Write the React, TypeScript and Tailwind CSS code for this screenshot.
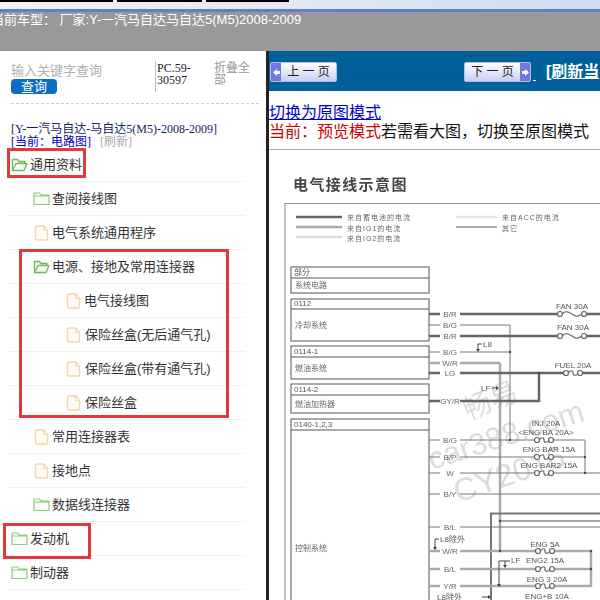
import React from 'react';

const cjk = "font-['Liberation_Sans','Noto_Sans_CJK_SC',sans-serif]";
const serif = "font-['Liberation_Serif','Noto_Sans_CJK_SC',serif]";

const FolderIcon: React.FC<{ open?: boolean }> = ({ open }) => (
  <svg width="17" height="15" viewBox="0 0 17 15" fill="none" className="shrink-0">
    {open ? (
      <path
        d="M1.5 13.5V2.5h5l1.5 2h6v2M1.5 13.5h11.5l3-7H5L1.5 13.5z"
        stroke="#6cbb5a"
        strokeWidth="1.3"
        strokeLinejoin="round"
        fill="#f4fbf0"
      />
    ) : (
      <path
        d="M1 13.5V2h5.5L8 4h8v9.500H1zM1 5h15"
        stroke="#8ecb82"
        strokeWidth="1.2"
        strokeLinejoin="round"
        fill="#f7fcf5"
      />
    )}
  </svg>
);

const FileIcon = () => (
  <svg width="15" height="16" viewBox="0 0 15 16" fill="none" className="shrink-0">
    <path
      d="M1.500 2.500a1.500 1.500 0 0 1 1.500-1.500h6.500l4 4.500v8a1.500 1.500 0 0 1-1.500 1.500H3a1.500 1.500 0 0 1-1.500-1.500z"
      stroke="#f5d5a8"
      strokeWidth="1.400"
      fill="#fffdf9"
    />
    <path d="M9.500 1v4.500h4" stroke="#f5d5a8" strokeWidth="1" />
  </svg>
);

const treeRows = [
  { label: '通用资料', pad: 'pl-[3px]', icon: 'open', gap: 'gap-[2px]' },
  { label: '查阅接线图', pad: 'pl-[25px]', icon: 'folder', gap: 'gap-[2px]' },
  { label: '电气系统通用程序', pad: 'pl-[26px]', icon: 'file', gap: 'gap-[3px]' },
  { label: '电源、接地及常用连接器', pad: 'pl-[25px]', icon: 'open', gap: 'gap-[2px]' },
  { label: '电气接线图', pad: 'pl-[58px]', icon: 'file', gap: 'gap-[3px]' },
  { label: '保险丝盒(无后通气孔)', pad: 'pl-[58px]', icon: 'file', gap: 'gap-[4px]' },
  { label: '保险丝盒(带有通气孔)', pad: 'pl-[58px]', icon: 'file', gap: 'gap-[4px]' },
  { label: '保险丝盒', pad: 'pl-[58px]', icon: 'file', gap: 'gap-[4px]' },
  { label: '常用连接器表', pad: 'pl-[26px]', icon: 'file', gap: 'gap-[3px]' },
  { label: '接地点', pad: 'pl-[26px]', icon: 'file', gap: 'gap-[3px]' },
  { label: '数据线连接器', pad: 'pl-[25px]', icon: 'folder', gap: 'gap-[2px]' },
  { label: '发动机', pad: 'pl-[3px]', icon: 'folder', gap: 'gap-[2px]' },
  { label: '制动器', pad: 'pl-[3px]', icon: 'folder', gap: 'gap-[2px]' },
];

const Sidebar = () => (
  <aside className="relative w-[269px] h-full shrink-0 bg-white border-r-[3px] border-[#222] overflow-hidden">
    <div className="flex h-[52px] pt-[10px] pl-[11px]">
      <div className="w-[144px] pt-[3px]">
        <div className={`${cjk} text-[13px] leading-[14px] text-[#b0b0b0]`}>输入关键字查询</div>
        <div className={`${cjk} w-[46px] h-[15px] mt-[1px] rounded-[4px] bg-[#0b6cc0] text-white text-[13px] leading-[15px] text-center`}>
          查询
        </div>
      </div>
      <div className={`${serif} w-[59px] h-[31px] border-l border-[#bbb] pl-[1px] pt-[1px] text-[12px] leading-[12px] text-[#222]`}>
        PC.59-
        <br />
        30597
      </div>
      <div className={`${cjk} w-[42px] text-[12px] leading-[12px] pt-[1px] text-[#999]`}>折叠全部</div>
    </div>
    <div className="ml-[11px] w-[248px] border-t border-dashed border-[#ccc]" />
    <div className={`${serif} pl-[11px] pt-[19px] h-[44px] text-[12px] leading-[13px] text-[#112266]`}>
      <div>[Y-一汽马自达-马自达5(M5)-2008-2009]</div>
      <div className="flex gap-[9px]">
        <span className="text-[#0000c0]">[当前：电路图]</span>
        <span className="text-[#aaa]">[刷新]</span>
      </div>
    </div>
    <div className="ml-[8px]">
      {treeRows.map((r) => (
        <div
          key={r.label}
          className={`h-[34px] w-[237px] flex items-center ${r.pad} ${r.gap} border-b border-[#f2f2f2]`}
        >
          {r.icon === 'file' ? <FileIcon /> : <FolderIcon open={r.icon === 'open'} />}
          <span className={`${cjk} text-[13px] text-[#333] whitespace-nowrap`}>{r.label}</span>
        </div>
      ))}
    </div>
    {/* red annotation boxes */}
    <div className="absolute left-[7px] top-[97px] w-[79px] h-[30px] border-[3px] border-[#e03a3e]" />
    <div className="absolute left-[19px] top-[198px] w-[210px] h-[169px] border-[3px] border-[#e03a3e]" />
    <div className="absolute left-[3px] top-[472px] w-[88px] h-[36px] border-[3px] border-[#e03a3e]" />
  </aside>
);

const PageButton: React.FC<{ label: string; next?: boolean }> = ({ label, next }) => (
  <div
    className={`flex ${next ? 'flex-row-reverse' : ''} w-[67px] h-[20px] shrink-0 rounded-[2px] border border-[#a8c4ee] bg-gradient-to-b from-white to-[#c9cff2] overflow-hidden`}
  >
    <div className="w-[10px] h-full bg-[#7079e0] flex items-center justify-center">
      <svg width="7" height="7" viewBox="0 0 7 7">
        <path d={next ? 'M0 2h3V0l4 3.500L3 7V5H0z' : 'M7 2H4V0L0 3.500 4 7V5h3z'} fill="#fff" />
      </svg>
    </div>
    <div className={`${cjk} flex-1 text-center text-[12px] leading-[18px] text-[#222] whitespace-pre`}>{label}</div>
  </div>
);

const Fuse: React.FC<{ x: number; y: number; w?: number }> = ({ x, y, w = 7 }) => (
  <g>
    <rect x={x - w} y={y - 3} width={w * 2} height="6" fill="#fff" />
    <g stroke="#666" fill="#fff" strokeWidth="1.200">
      <circle cx={x - w} cy={y} r="2.500" />
      <circle cx={x + w} cy={y} r="2.500" />
      <path d={`M${x - w + 2} ${y}c3-3 5-3 ${w - 2} 0s4 3 ${w - 2} 0`} fill="none" />
    </g>
  </g>
);

const sections = [
  { y: 267, head: 278, bottom: 293, code: '部分', name: '系统电路', nameY: 288 },
  { y: 299, head: 309, bottom: 341, code: '0112', name: '冷却系统', nameY: 328 },
  { y: 346, head: 357, bottom: 379, code: '0114-1', name: '燃油系统', nameY: 371 },
  { y: 384, head: 395, bottom: 413, code: '0114-2', name: '燃油加热器', nameY: 407 },
  { y: 419, head: 430, bottom: 640, code: '0140-1,2,3', name: '控制系统', nameY: 551 },
];

const wires = [
  { y: 314, label: 'B/R', color: '#666', w: 2.500 },
  { y: 325, label: 'B/G', color: '#777', w: 1 },
  { y: 336, label: 'B/R', color: '#666', w: 2.500 },
  { y: 352, label: 'B/G', color: '#777', w: 1 },
  { y: 363, label: 'W/R', color: '#aaa', w: 2.500 },
  { y: 373, label: 'LG', color: '#666', w: 2.500 },
  { y: 401, label: 'GY/R', color: '#666', w: 2.500 },
  { y: 440, label: 'B/G', color: '#777', w: 1 },
  { y: 457, label: 'B/P', color: '#777', w: 1 },
  { y: 473, label: 'W', color: '#777', w: 1 },
  { y: 494, label: 'B/Y', color: '#777', w: 1 },
  { y: 527, label: 'B/L', color: '#777', w: 1 },
  { y: 551, label: 'W/R', color: '#aaa', w: 2.500 },
  { y: 569, label: 'B/L', color: '#aaa', w: 2.500 },
  { y: 586, label: 'Y/R', color: '#aaa', w: 2.500 },
];

// end of each wire on the right, most run off the page
const wireEnd: Record<number, number> = { 325: 510, 352: 510, 363: 500, 401: 539, 440: 585, 457: 585, 551: 591, 569: 591, 586: 591 };

const fuses = [
  { x: 572, y: 314, w: 12 },
  { x: 572, y: 336, w: 12 },
  { x: 573, y: 373, w: 7 },
  { x: 544, y: 440, w: 7 },
  { x: 544, y: 457, w: 7 },
  { x: 544, y: 473, w: 7 },
  { x: 545, y: 551, w: 7 },
  { x: 545, y: 569, w: 7 },
  { x: 545, y: 586, w: 7 },
];

const fuseLabels = [
  { x: 572, y: 309, t: 'FAN 30A' },
  { x: 573, y: 330, t: 'FAN 30A' },
  { x: 573, y: 368, t: 'FUEL 20A' },
  { x: 546, y: 426, t: 'INJ 20A' },
  { x: 546, y: 435, t: '<ENG BA 20A>' },
  { x: 549, y: 452, t: 'ENG BAR 15A' },
  { x: 549, y: 468, t: 'ENG BAR2 15A' },
  { x: 545, y: 547, t: 'ENG 5A' },
  { x: 545, y: 563, t: 'ENG2 15A' },
  { x: 547, y: 582, t: 'ENG 3 20A' },
  { x: 547, y: 599, t: 'ENG+B 10A' },
];

const Diagram = () => (
  <svg
    viewBox="269 150 331 450"
    width="331"
    height="450"
    className="block blur-[0.4px]"
    fontFamily="'Liberation Sans','Noto Sans CJK SC',sans-serif"
  >
    <text x="293" y="190" fontSize="15" fontWeight="700" letterSpacing="1.400" fill="#444">电气接线示意图</text>
    <path d="M285 610V203.500H600" fill="none" stroke="#999" strokeWidth="1.200" />

    {/* legend */}
    <path d="M296 217h46" stroke="#666" strokeWidth="2.500" />
    <path d="M296 227h46" stroke="#aaa" strokeWidth="2.500" />
    <path d="M296 237h46" stroke="#ddd" strokeWidth="2.500" />
    <path d="M456 217h41" stroke="#e6e6e6" strokeWidth="2.500" />
    <path d="M456 227h41" stroke="#555" strokeWidth="1" />
    <g fontSize="7" fill="#666" letterSpacing="1">
      <text x="347" y="220">来自蓄电池的电流</text>
      <text x="347" y="230.500">来自IG1的电流</text>
      <text x="347" y="240.500">来自IG2的电流</text>
      <text x="502" y="220">来自ACC的电流</text>
      <text x="502" y="230.500">其它</text>
    </g>

    {/* watermark */}
    <g fill="#dcdcdc">
      <text x="468" y="420" fontSize="28" transform="rotate(-22 468 420)">畅易</text>
      <text x="432" y="470" fontSize="31" transform="rotate(-18 432 470)">car388.com</text>
      <text x="458" y="503" fontSize="32" transform="rotate(-19 458 503)">CY2016</text>
    </g>

    {/* system boxes */}
    {sections.map((s) => (
      <g key={s.code} stroke="#555" fill="none" strokeWidth="1">
        <rect x="291" y={s.y} width="138" height={s.bottom - s.y} />
        <path d={`M291 ${s.head}H429`} />
        <text x="294" y={s.head - 3} fontSize="8" fill="#555" stroke="none">{s.code}</text>
        <text x="295" y={s.nameY} fontSize="8" fill="#666" stroke="none">{s.name}</text>
      </g>
    ))}

    {/* verticals and control block */}
    <path d="M510 325V440" stroke="#777" strokeWidth="1" />
    <path d="M500 363V551" stroke="#aaa" strokeWidth="2.500" />
    <path d="M539 373V402" stroke="#666" strokeWidth="2.500" />
    <path d="M585 440V473" stroke="#777" strokeWidth="1" />
    <path d="M591 551V587" stroke="#aaa" strokeWidth="2.500" />
    <path d="M600 513.500H491V600" fill="none" stroke="#777" strokeWidth="2" />
    <path d="M500 521H600" stroke="#aaa" strokeWidth="2" />

    {/* wires */}
    {wires.map((w) => (
      <g key={w.y}>
        <path d={`M429 ${w.y}h11M460 ${w.y}H${wireEnd[w.y] ?? 600}`} stroke={w.color} strokeWidth={w.w} />
        <text x="450" y={w.y + 3} textAnchor="middle" fontSize="8" fill="#666">{w.label}</text>
      </g>
    ))}

    {/* fuses */}
    {fuses.map((f) => (
      <Fuse key={f.y} x={f.x} y={f.y} w={f.w} />
    ))}
    <g fontSize="8" fill="#555" textAnchor="middle">
      {fuseLabels.map((f) => (
        <text key={f.y} x={f.x} y={f.y}>{f.t}</text>
      ))}
    </g>

    {/* branch notes */}
    <g fontSize="8" fill="#555">
      <text x="483" y="347">L8</text>
      <text x="481" y="391">LF</text>
      <text x="511" y="563">LF</text>
      <text x="440" y="542">L8除外</text>
      <text x="437" y="600">L8除外</text>
    </g>
    <g fill="none" stroke="#444" strokeWidth="1">
      <path d="M482 344h-4v6" />
      <path d="M439 539h-4v9" />
      <path d="M510 561h-11v23" />
      <path d="M505 561v4" />
      <path d="M492 388h5" />
      <path d="M482 597h7" />
    </g>
    <g fill="#444">
      <path d="M476 349h4l-2 3z" />
      <path d="M433 547h4l-2 3z" />
      <path d="M497 584h4l-2 3z" />
      <path d="M503 565h4l-2 3z" />
      <path d="M496 386v4l3-2z" />
      <path d="M488 595v4l3-2z" />
      <circle cx="510" cy="352" r="1.200" />
      <circle cx="510" cy="440" r="1.200" />
      <circle cx="539" cy="373" r="1.200" />
      <circle cx="585" cy="457" r="1.200" />
      <circle cx="585" cy="473" r="1.200" />
      <circle cx="500" cy="521" r="1.200" />
      <circle cx="500" cy="551" r="1.200" />
      <circle cx="591" cy="551" r="1.200" />
      <circle cx="591" cy="569" r="1.200" />
    </g>
  </svg>
);

export default function App() {
  return (
    <div className="w-[600px] h-[600px] flex flex-col overflow-hidden bg-white">
      {/* browser strip */}
      <div className="h-[12px] shrink-0 flex gap-[4px] items-start border-b-[3px] border-[#5f7fcf] bg-gradient-to-r from-[#f2f3f8] to-[#d5dcf0]">
        <div className="w-[113px] h-[2px] bg-black" />
        <div className="w-[85px] h-[2px] bg-black" />
        <div className="w-[83px] h-[2px] bg-black" />
      </div>
      <div className={`${cjk} h-[39px] shrink-0 bg-[#999999] text-white text-[13px] leading-[15px] ml-[-9px] whitespace-nowrap`}>
        当前车型： 厂家:Y-一汽马自达马自达5(M5)2008-2009
      </div>
      <div className="flex flex-1 min-h-0">
        <Sidebar />
        <main className="flex-1 min-w-0 overflow-hidden">
          <div className="h-[40px] bg-[#00619a] flex items-start pt-[11px] pl-[1px] whitespace-nowrap">
            <PageButton label="上 一 页" />
            <div className="ml-[127px]">
              <PageButton label="下 一 页" next />
            </div>
            <div className="ml-[2px] mt-[18px] w-[3px] h-[1px] bg-white" />
            <span className={`${cjk} ml-[10px] mt-[-2px] text-[16px] font-bold text-white underline`}>[刷新当</span>
          </div>
          <div className={`${cjk} h-[59px] pt-[12px] text-[16px] leading-[19px] border-b border-[#aaa] whitespace-nowrap`}>
            <a className="text-[#0000cc] underline">切换为原图模式</a>
            <div>
              <span className="text-[#cc0000]">当前：预览模式</span>
              <span className="text-[#111]">若需看大图，切换至原图模式</span>
            </div>
          </div>
          <Diagram />
        </main>
      </div>
    </div>
  );
}
